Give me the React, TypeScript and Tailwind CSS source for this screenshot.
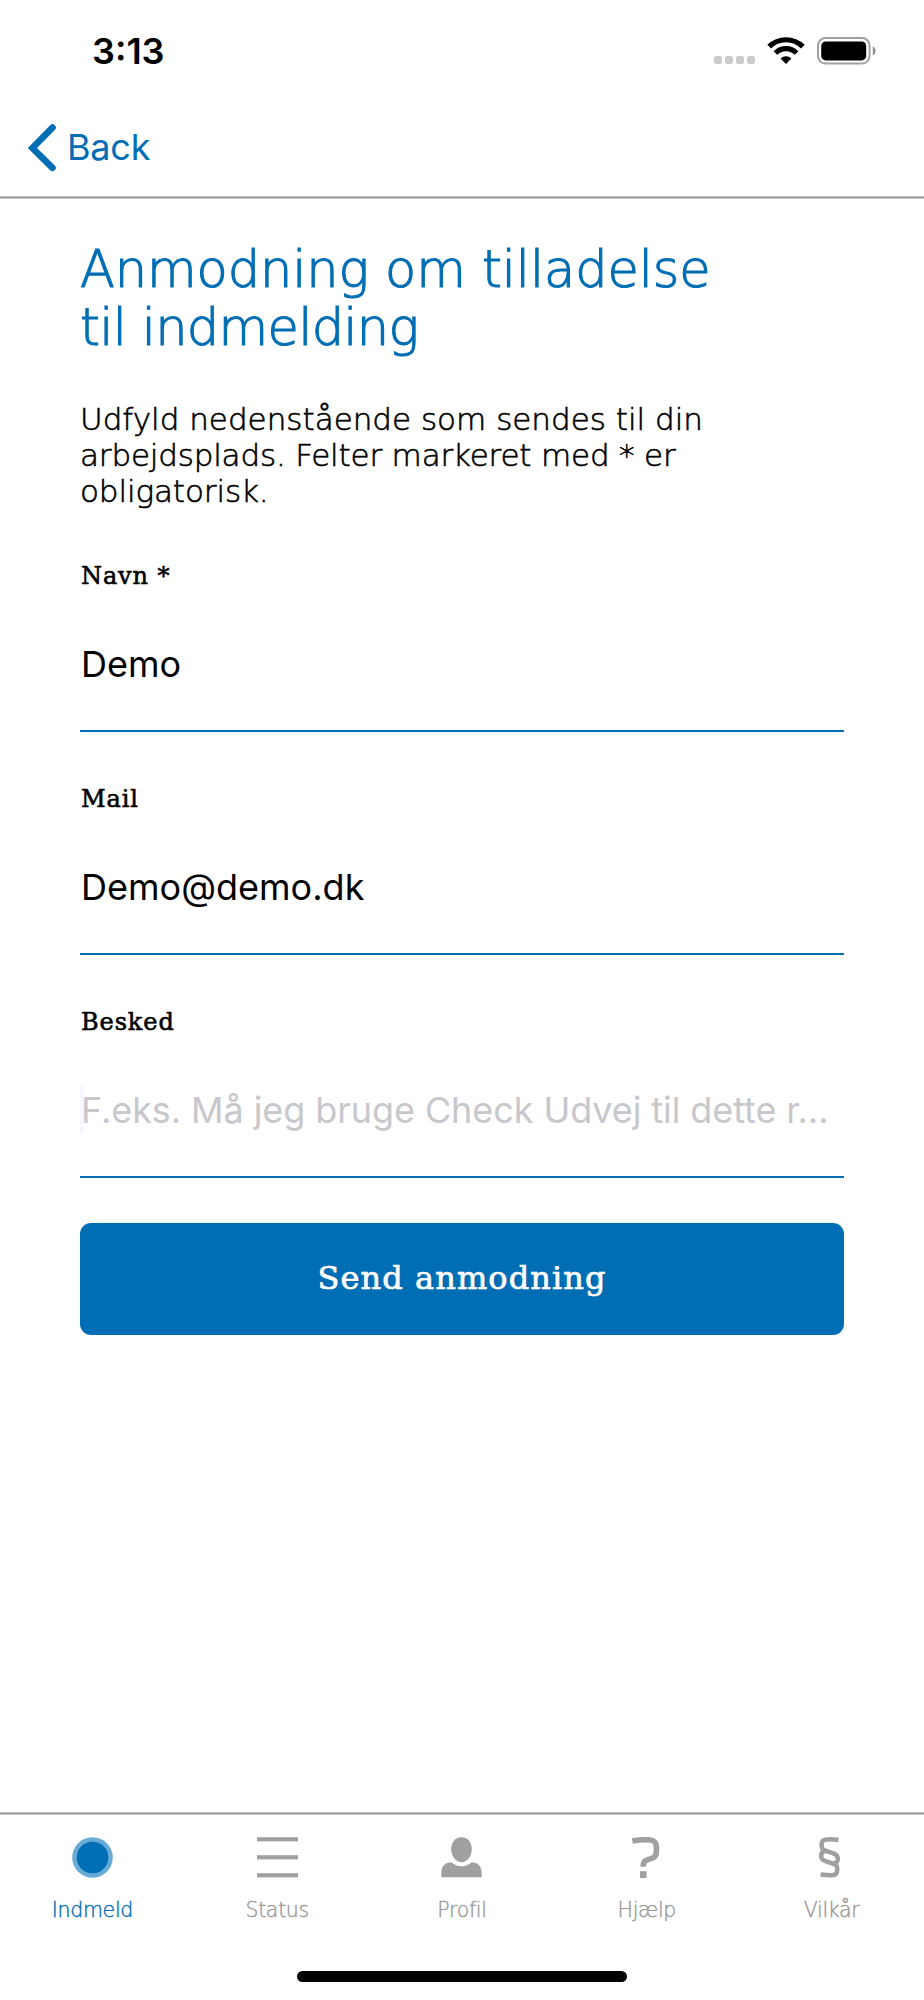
import React, { useState } from 'react';

interface FieldProps {
  label: string;
  value: string;
  placeholder?: string;
  active?: boolean;
  onChange: (value: string) => void;
}

const Field: React.FC<FieldProps> = ({ label, value, placeholder, active, onChange }) => (
  <label className="block border-b-2 border-[#006eb4] pb-[42px]">
    <span className="block pl-px font-['DejaVu_Serif',serif] text-2xl leading-7 tracking-[0.9px] text-black [-webkit-text-stroke:0.6px_#000]">
      {label}
    </span>
    <div className="relative mt-[50px]">
      {active && <span className="absolute left-0 top-0 h-12 w-1 bg-[#f7f8ff]" />}
      <input
        className="relative block h-12 w-full bg-transparent pl-px font-[Inter,sans-serif] text-[36px] leading-[48px] tracking-[0.02px] text-black outline-none placeholder:tracking-[-0.08px] placeholder:text-[#c7c7cc]"
        value={value}
        placeholder={placeholder}
        onChange={(e) => onChange(e.target.value)}
      />
    </div>
  </label>
);

const StatusBar = () => (
  <div className="flex h-[100px] items-center justify-between pl-[92px] pr-[48px] pt-px">
    <span className="font-[Inter,sans-serif] text-[36px] font-semibold leading-none text-black">3:13</span>
    <div className="flex items-center">
      <div className="mr-[12px] mt-[18px] flex gap-[3px]">
        {[0, 1, 2, 3].map((i) => (
          <span key={i} className="h-[8px] w-[8px] rounded-[2.5px] bg-[#cbcbcb]" />
        ))}
      </div>
      <svg width="38" height="28" viewBox="0 0 38 28" className="mr-[12px]">
        <g fill="none" stroke="#000" strokeWidth="5.2">
          <path d="M2.2 9.6 A24 24 0 0 1 35.8 9.6" />
          <path d="M8.4 16 A15 15 0 0 1 29.6 16" />
        </g>
        <path d="M19 27 L13.6 21.6 A7.6 7.6 0 0 1 24.4 21.6 Z" fill="#000" />
      </svg>
      <svg width="59" height="28" viewBox="0 0 59 28">
        <rect x="1" y="1" width="51.6" height="25.6" rx="7.5" fill="none" stroke="#a0a0a0" strokeWidth="2" />
        <rect x="4.2" y="4.4" width="45" height="19" rx="4.5" fill="#000" />
        <path d="M55.8 9.2 C59.4 10.6 59.4 17 55.8 18.4 Z" fill="#8c8c8c" />
      </svg>
    </div>
  </div>
);

const CircleIcon = () => (
  <svg width="41" height="41" viewBox="0 0 41 41">
    <circle cx="20.5" cy="20.5" r="20.3" fill="#69abd7" />
    <circle cx="20.5" cy="20.5" r="15.8" fill="#006eb4" />
  </svg>
);

const MenuIcon = () => (
  <svg width="41" height="41" viewBox="0 0 41 41" fill="#a0a0a0">
    <rect y="0.2" width="41" height="4.2" />
    <rect y="18.2" width="41" height="4.2" />
    <rect y="36.2" width="41" height="4.2" />
  </svg>
);

const ProfileIcon = () => (
  <svg width="41" height="41" viewBox="0 0 41 41" fill="#a0a0a0">
    <path d="M20.5 0.2 C27 0.2 30.8 5.4 30.8 12 C30.8 19 26.6 25.2 20.5 25.2 C14.4 25.2 10.2 19 10.2 12 C10.2 5.4 14 0.2 20.5 0.2 Z" />
    <path d="M0.3 40.3 V36 C0.3 29 4.5 25.2 10.5 25.2 C13.5 27.6 16.5 29.2 20.5 29.2 C24.5 29.2 27.5 27.6 30.5 25.2 C36.5 25.2 40.7 29 40.7 36 V40.3 Z" />
  </svg>
);

const HelpIcon = () => (
  <svg width="41" height="41" viewBox="0 0 41 41">
    <path
      d="M6.3 4.1 C11 3.1 16 2.7 21 2.7 C28 2.7 30.4 4.9 30.4 10 V14 C30.4 19 28.8 20.4 24.8 21.7 L21.2 22.9 C18.6 23.8 17.3 24.8 17.3 28 V29.8"
      fill="none"
      stroke="#a0a0a0"
      strokeWidth="5.6"
    />
    <rect x="14" y="34.2" width="6.6" height="6.8" fill="#a0a0a0" />
  </svg>
);

const SectionIcon = () => (
  <svg width="41" height="41" viewBox="0 0 41 41" fill="none" stroke="#a0a0a0" strokeWidth="4.6">
    <path d="M27.4 2.9 C23.4 2.4 21 2.3 18.4 2.3 C12.4 2.3 10.6 3.6 10.6 8 C10.6 11.5 11.4 12.6 14.4 13.6 L22.4 16.4 C25.8 17.6 26.8 18.8 26.8 21.6 C26.8 24.8 25.8 26 22.8 26.2" />
    <path d="M14.4 14 C11.2 14.2 10.2 15.8 10.2 18.8 C10.2 21.8 11 23 14.4 24.1 L22.4 26.8 C25.4 27.8 26.2 29 26.2 32.4 C26.2 36.8 24.6 38.3 19.8 38.3 C16.4 38.3 13 38 9.6 37.5" />
  </svg>
);

const TABS = [
  { name: 'Indmeld', icon: CircleIcon },
  { name: 'Status', icon: MenuIcon },
  { name: 'Profil', icon: ProfileIcon },
  { name: 'Hjælp', icon: HelpIcon },
  { name: 'Vilkår', icon: SectionIcon },
];

export default function App() {
  const [form, setForm] = useState({ navn: 'Demo', mail: 'Demo@demo.dk', besked: '' });

  return (
    <div className="flex h-[2000px] w-[924px] flex-col overflow-hidden bg-white font-['DejaVu_Sans',sans-serif]">
      <header>
        <StatusBar />
        <div className="flex h-24 items-center pl-[28px]">
          <svg width="29" height="48" viewBox="0 0 29 48" className="mr-[10px]">
            <path d="M24.5 3.6 L4.4 24 L24.5 43.8" fill="none" stroke="#006eb4" strokeWidth="6.6" strokeLinecap="round" />
          </svg>
          <button className="pb-[2px] font-[Inter,sans-serif] text-[36px] leading-none tracking-[-0.2px] text-[#006eb4]">Back</button>
        </div>
        <div className="h-[3px] border-y border-[#c4c4c4] bg-[#999999]" />
      </header>

      <main className="flex-1 px-20 pt-[42px]">
        <h1 className="text-[51px] font-extralight leading-[58px] tracking-[-0.1px] text-[#006eb4] [-webkit-text-stroke:1.1px_#006eb4]">
          Anmodning om tilladelse
          <br />
          <span className="tracking-[-0.7px]">til indmelding</span>
        </h1>
        <p className="mt-[44px] text-[31px] font-extralight leading-9 text-black [-webkit-text-stroke:0.6px_#000]">
          Udfyld nedenstående som sendes til din
          <br />
          <span className="tracking-[-0.18px]">arbejdsplads. Felter markeret med * er</span>
          <br />
          <span className="tracking-[-0.1px]">obligatorisk.</span>
        </p>

        <form className="mt-[53px]" onSubmit={(e) => e.preventDefault()}>
          <div className="flex flex-col gap-[53px]">
            <Field label="Navn *" value={form.navn} onChange={(navn) => setForm({ ...form, navn })} />
            <Field label="Mail" value={form.mail} onChange={(mail) => setForm({ ...form, mail })} />
            <Field
              label="Besked"
              value={form.besked}
              placeholder="F.eks. Må jeg bruge Check Udvej til dette r..."
              active
              onChange={(besked) => setForm({ ...form, besked })}
            />
          </div>
          <button
            type="submit"
            className="mt-[45px] block h-[112px] w-full rounded-[11px] bg-[#006eb4] pb-[3px] font-['DejaVu_Serif',serif] text-[32px] tracking-[1.1px] text-white [-webkit-text-stroke:0.7px_#fff]"
          >
            Send anmodning
          </button>
        </form>
      </main>

      <nav className="h-[188px]">
        <div className="h-[3px] border-y border-[#c4c4c4] bg-[#999999]" />
        <div className="grid grid-cols-5 pt-[22px]">
          {TABS.map(({ name, icon: Icon }, i) => (
            <button key={name} className="flex flex-col items-center">
              <Icon />
              <span
                className={`mt-[18px] text-[20.5px] font-extralight leading-7 tracking-[-0.3px] [-webkit-text-stroke:0.4px_currentColor] ${i === 0 ? 'text-[#006eb4]' : 'text-[#999999]'}`}
              >
                {name}
              </span>
            </button>
          ))}
        </div>
        <div className="mx-auto mt-[47px] h-[11px] w-[330px] rounded-full bg-black" />
      </nav>
    </div>
  );
}
